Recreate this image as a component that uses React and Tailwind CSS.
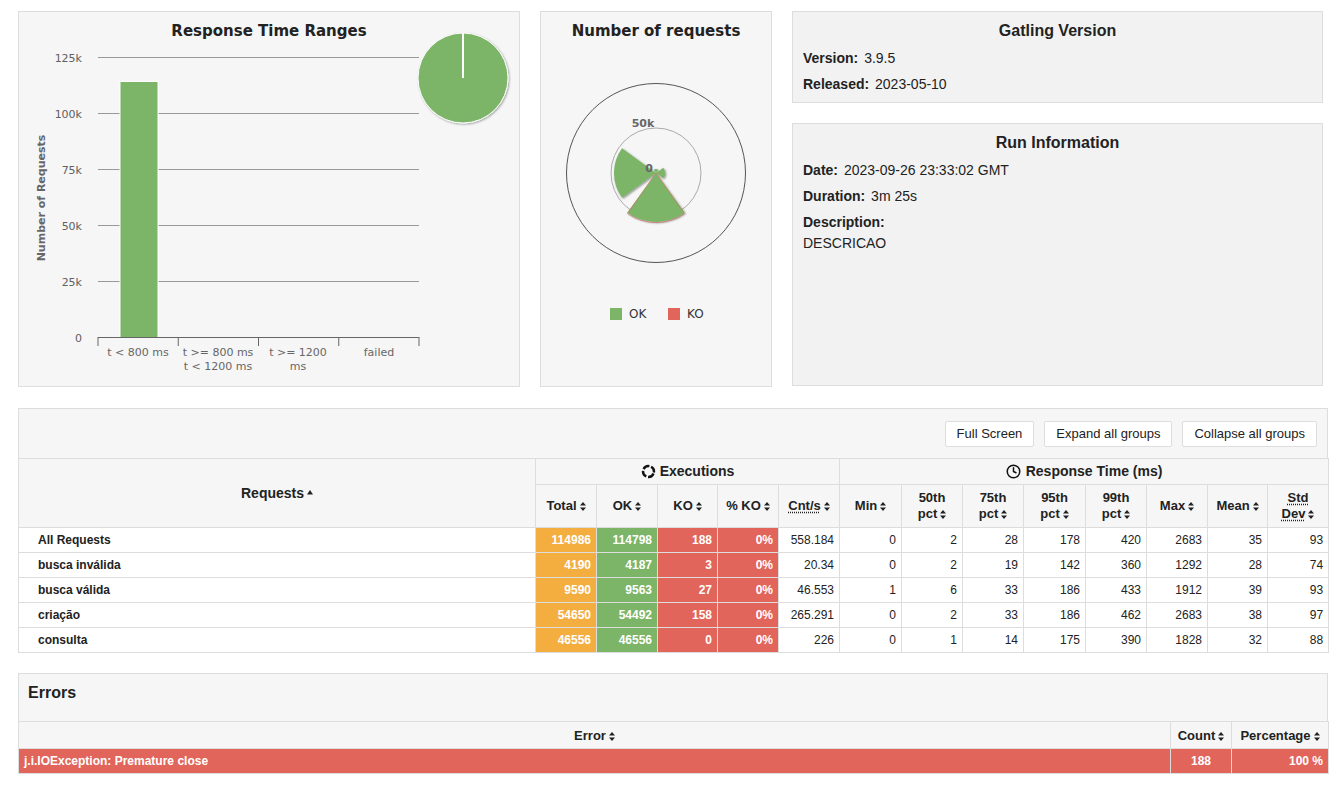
import { Clock } from 'lucide-react';

const GREEN = '#7cb468';
const RED = '#e1655a';

const SortIcon = () => (
  <svg width="6" height="9" viewBox="0 0 6 9" className="inline-block ml-[3px] align-[-1px]">
    <path d="M3 0 L6 3.6 H0Z M3 9 L6 5.4 H0Z" fill="#222" />
  </svg>
);

const UpIcon = () => (
  <svg width="6" height="5" viewBox="0 0 6 5" className="inline-block ml-[3px] align-[3px]">
    <path d="M3 0 L6 4.5 H0Z" fill="#222" />
  </svg>
);

const ExecIcon = () => (
  <svg width="15" height="15" viewBox="0 0 16 16">
    <circle cx="8" cy="8" r="5.8" fill="none" stroke="#111" strokeWidth="2.6" strokeDasharray="7.1 2" transform="rotate(22 8 8)" />
  </svg>
);

// compass angle (deg, clockwise from top) -> point
const pt = (cx, cy, r, a) => {
  const rad = (a * Math.PI) / 180;
  return [cx + r * Math.sin(rad), cy - r * Math.cos(rad)];
};
const wedge = (cx, cy, r, a0, a1) => {
  const [x0, y0] = pt(cx, cy, r, a0);
  const [x1, y1] = pt(cx, cy, r, a1);
  return `M${cx} ${cy} L${x0} ${y0} A${r} ${r} 0 0 1 ${x1} ${y1} Z`;
};

const RangesChart = () => {
  const grid = [
    { y: 46, l: '125k' },
    { y: 102, l: '100k' },
    { y: 158, l: '75k' },
    { y: 214, l: '50k' },
    { y: 270, l: '25k' },
  ];
  const ticks = [80, 160.25, 240.5, 320.75, 401];
  return (
    <svg width="500" height="374" viewBox="1 1 500 374" style={{ fontFamily: '"DejaVu Sans", sans-serif' }}>
      <defs>
        <filter id="pieShadow" x="-20%" y="-20%" width="140%" height="140%">
          <feDropShadow dx="1" dy="1" stdDeviation="1.2" floodOpacity="0.35" />
        </filter>
      </defs>
      <text x="251" y="25" textAnchor="middle" fontSize="15" fontWeight="bold" fill="#222">Response Time Ranges</text>
      {grid.map((g) => (
        <g key={g.l}>
          <line x1="80" x2="401" y1={g.y + 0.5} y2={g.y + 0.5} stroke="#999" strokeWidth="1" />
          <text x="64" y={g.y + 5} textAnchor="end" fontSize="11" fill="#606060">{g.l}</text>
        </g>
      ))}
      <text x="64" y="331" textAnchor="end" fontSize="11" fill="#606060">0</text>
      <text transform="translate(27 187) rotate(-90)" textAnchor="middle" fontSize="11" fontWeight="bold" fill="#666">Number of Requests</text>
      <rect x="102" y="70.5" width="38" height="256" fill={GREEN} stroke="#fff" strokeWidth="1" />
      <line x1="80" x2="401" y1="326.5" y2="326.5" stroke="#666" strokeWidth="1" />
      {ticks.map((t) => (
        <line key={t} x1={t} x2={t} y1="326" y2="335" stroke="#666" strokeWidth="1" />
      ))}
      <g fontSize="11" fill="#666" textAnchor="middle">
        <text x="120" y="345">t &lt; 800 ms</text>
        <text x="200" y="345">t &gt;= 800 ms</text>
        <text x="200" y="359">t &lt; 1200 ms</text>
        <text x="280" y="345">t &gt;= 1200</text>
        <text x="280" y="359">ms</text>
        <text x="361" y="345">failed</text>
      </g>
      <g filter="url(#pieShadow)">
        <circle cx="445" cy="67" r="45" fill={GREEN} stroke="#fff" strokeWidth="1" />
      </g>
      <line x1="445" y1="22" x2="445" y2="67" stroke="#fff" strokeWidth="2" />
    </svg>
  );
};

const RequestsChart = () => {
  const cx = 116;
  const cy = 162;
  const slices = [
    { c: 0, r: 4 },
    { c: 90, r: 9 },
    { c: 180, r: 49 },
    { c: 270, r: 42 },
  ];
  return (
    <svg width="230" height="374" viewBox="1 1 230 374" style={{ fontFamily: '"DejaVu Sans", sans-serif' }}>
      <defs>
        <filter id="wedgeShadow" x="-30%" y="-30%" width="160%" height="160%">
          <feDropShadow dx="1" dy="1" stdDeviation="1.2" floodOpacity="0.45" />
        </filter>
      </defs>
      <text x="116" y="25" textAnchor="middle" fontSize="15" fontWeight="bold" fill="#222">Number of requests</text>
      <circle cx={cx} cy={cy} r="89.5" fill="none" stroke="#555" strokeWidth="1" />
      <circle cx={cx} cy={cy} r="45" fill="none" stroke="#aaa" strokeWidth="1" />
      <g filter="url(#wedgeShadow)">
        {slices.map((s) => (
          <path key={s.c} d={wedge(cx, cy, s.r, s.c - 36, s.c + 36)} fill={GREEN} />
        ))}
      </g>
      <path d={wedge(cx, cy, 49.6, 145, 215)} fill="none" stroke={RED} strokeWidth="0.8" opacity="0.7" />
      <text x="103" y="116" textAnchor="middle" fontSize="11" fontWeight="bold" fill="#666">50k</text>
      <text x="109" y="161" textAnchor="middle" fontSize="11" fontWeight="bold" fill="#666">0</text>
      <rect x="70" y="297" width="12" height="12" fill={GREEN} />
      <text x="89" y="307" fontSize="12" fill="#333">OK</text>
      <rect x="128" y="297" width="12" height="12" fill={RED} />
      <text x="147" y="307" fontSize="12" fill="#333">KO</text>
    </svg>
  );
};

const InfoRow = ({ label, value }) => (
  <div className="leading-[26px] text-[14px]">
    <span className="font-bold">{label}</span> <span className="ml-[2px]">{value}</span>
  </div>
);

const rows = [
  { name: 'All Requests', total: 114986, ok: 114798, ko: 188, pct: '0%', cnt: '558.184', v: [0, 2, 28, 178, 420, 2683, 35, 93] },
  { name: 'busca inválida', total: 4190, ok: 4187, ko: 3, pct: '0%', cnt: '20.34', v: [0, 2, 19, 142, 360, 1292, 28, 74] },
  { name: 'busca válida', total: 9590, ok: 9563, ko: 27, pct: '0%', cnt: '46.553', v: [1, 6, 33, 186, 433, 1912, 39, 93] },
  { name: 'criação', total: 54650, ok: 54492, ko: 158, pct: '0%', cnt: '265.291', v: [0, 2, 33, 186, 462, 2683, 38, 97] },
  { name: 'consulta', total: 46556, ok: 46556, ko: 0, pct: '0%', cnt: '226', v: [0, 1, 14, 175, 390, 1828, 32, 88] },
];

const th = 'border border-[#ddd] bg-[#f6f6f6] font-bold text-[13px] leading-[16px] text-center p-0';
const td = 'border border-[#ddd] h-[25px] text-[12px] text-right pr-[5px] py-0';
const colored = 'border border-[#ddd] h-[25px] text-[12px] text-right pr-[5px] py-0 font-bold text-white';

const Btn = ({ children }) => (
  <button type="button" className="h-[26px] px-[11px] bg-white border border-[#ddd] rounded-[2px] text-[13px] text-[#222]">
    {children}
  </button>
);

export default function App() {
  return (
    <div className="min-h-screen w-[1341px] bg-white px-[18px] pt-[11px] pb-[14px] font-['Liberation_Sans',Arial,sans-serif] text-[#222]">
      <div className="flex gap-[20px] items-start">
        <div className="w-[502px] h-[376px] border border-[#ddd] bg-[#f6f6f6]">
          <RangesChart />
        </div>
        <div className="w-[232px] h-[376px] border border-[#ddd] bg-[#f6f6f6]">
          <RequestsChart />
        </div>
        <div className="w-[536px] flex flex-col gap-[20px]">
          <div className="h-[92px] border border-[#ddd] bg-[#f2f2f2] px-[10px] pt-[8px]">
            <div className="text-center font-bold text-[16px] leading-[22px]">Gatling Version</div>
            <div className="mt-[3px]">
              <InfoRow label="Version:" value="3.9.5" />
              <InfoRow label="Released:" value="2023-05-10" />
            </div>
          </div>
          <div className="h-[263px] border border-[#ddd] bg-[#f2f2f2] px-[10px] pt-[8px]">
            <div className="text-center font-bold text-[16px] leading-[22px]">Run Information</div>
            <div className="mt-[3px]">
              <InfoRow label="Date:" value="2023-09-26 23:33:02 GMT" />
              <InfoRow label="Duration:" value="3m 25s" />
              <div className="leading-[26px] text-[14px] font-bold">Description:</div>
              <div className="leading-[16px] text-[14px]">DESCRICAO</div>
            </div>
          </div>
        </div>
      </div>

      <div className="mt-[21px] w-[1310px]">
        <div className="h-[50px] border border-b-0 border-[#ddd] bg-[#f6f6f6] flex items-center justify-end gap-[10px] pr-[10px]">
          <Btn>Full Screen</Btn>
          <Btn>Expand all groups</Btn>
          <Btn>Collapse all groups</Btn>
        </div>
        <table className="w-[1310px] table-fixed border-collapse">
          <colgroup>
            <col className="w-[517px]" />
            <col className="w-[61px]" />
            <col className="w-[61px]" />
            <col className="w-[60px]" />
            <col className="w-[61px]" />
            <col className="w-[61px]" />
            <col className="w-[62px]" />
            <col className="w-[61px]" />
            <col className="w-[61px]" />
            <col className="w-[62px]" />
            <col className="w-[61px]" />
            <col className="w-[61px]" />
            <col className="w-[60px]" />
            <col className="w-[61px]" />
          </colgroup>
          <thead>
            <tr className="h-[26px]">
              <th rowSpan={2} className={`${th} text-[14px]`}>
                Requests<UpIcon />
              </th>
              <th colSpan={5} className={`${th} text-[14px]`}>
                <span className="inline-flex items-center gap-[4px] relative top-[1px]"><ExecIcon />Executions</span>
              </th>
              <th colSpan={8} className={`${th} text-[14px]`}>
                <span className="inline-flex items-center gap-[5px] relative top-[1px]"><Clock size={15} strokeWidth={2.4} color="#111" />Response Time (ms)</span>
              </th>
            </tr>
            <tr className="h-[43px]">
              <th className={th}>Total<SortIcon /></th>
              <th className={th}>OK<SortIcon /></th>
              <th className={th}>KO<SortIcon /></th>
              <th className={th}>% KO<SortIcon /></th>
              <th className={th}><span className="underline decoration-dotted underline-offset-2">Cnt/s</span><SortIcon /></th>
              <th className={th}>Min<SortIcon /></th>
              <th className={th}>50th<br />pct<SortIcon /></th>
              <th className={th}>75th<br />pct<SortIcon /></th>
              <th className={th}>95th<br />pct<SortIcon /></th>
              <th className={th}>99th<br />pct<SortIcon /></th>
              <th className={th}>Max<SortIcon /></th>
              <th className={th}>Mean<SortIcon /></th>
              <th className={th}>
                <span className="underline decoration-dotted underline-offset-2">Std</span><br />
                <span className="underline decoration-dotted underline-offset-2">Dev</span><SortIcon />
              </th>
            </tr>
          </thead>
          <tbody>
            {rows.map((r) => (
              <tr key={r.name} className="h-[25px]">
                <td className="border border-[#ddd] h-[25px] text-[12px] font-bold text-left pl-[19px] py-0">{r.name}</td>
                <td className={`${colored} bg-[#f4ae3f]`}>{r.total}</td>
                <td className={`${colored} bg-[#7cb468]`}>{r.ok}</td>
                <td className={`${colored} bg-[#e1655a]`}>{r.ko}</td>
                <td className={`${colored} bg-[#e1655a]`}>{r.pct}</td>
                <td className={td}>{r.cnt}</td>
                {r.v.map((v, i) => (
                  <td key={i} className={td}>{v}</td>
                ))}
              </tr>
            ))}
          </tbody>
        </table>
      </div>

      <div className="mt-[20px] w-[1310px]">
        <div className="h-[48px] border border-b-0 border-[#ddd] bg-[#f6f6f6] pl-[9px] pt-[9px]">
          <h2 className="text-[16px] leading-[20px] font-bold">Errors</h2>
        </div>
        <table className="w-[1310px] table-fixed border-collapse">
          <colgroup>
            <col className="w-[1152px]" />
            <col className="w-[61px]" />
            <col className="w-[97px]" />
          </colgroup>
          <thead>
            <tr className="h-[27px]">
              <th className={th}><span className="relative top-[1px]">Error<SortIcon /></span></th>
              <th className={th}><span className="relative top-[1px]">Count<SortIcon /></span></th>
              <th className={th}><span className="relative top-[1px]">Percentage<SortIcon /></span></th>
            </tr>
          </thead>
          <tbody>
            <tr className="h-[25px] bg-[#e1655a] text-white">
              <td className="border border-[#ddd] text-[12px] font-bold text-left pl-[5px] py-0">j.i.IOException: Premature close</td>
              <td className="border border-[#ddd] text-[12px] font-bold text-center py-0">188</td>
              <td className="border border-[#ddd] text-[12px] font-bold text-right pr-[5px] py-0">100 %</td>
            </tr>
          </tbody>
        </table>
      </div>
    </div>
  );
}
